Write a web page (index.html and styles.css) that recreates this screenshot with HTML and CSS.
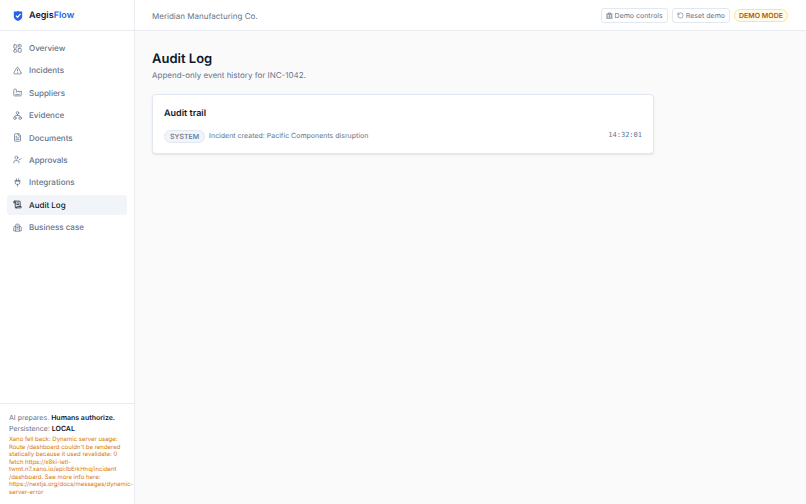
FILE: index.html
```html
<!DOCTYPE html>
<html lang="en">
<head>
<meta charset="utf-8">
<meta name="viewport" content="width=device-width, initial-scale=1">
<title>AegisFlow – Audit Log</title>
<link rel="stylesheet" href="styles.css">
</head>
<body>
<div class="app">
  <aside class="sidebar">
    <a class="brand" href="#">
      <svg class="brand-mark" viewBox="0 0 24 24" aria-hidden="true"><path fill="#2563eb" d="M2 1q5 1 10-1 5 2 10 1v12c0 5-4 9-10 11C6 22 2 18 2 13Z"/><path fill="none" stroke="#fff" stroke-width="3" d="m7 11 4 4 7-8"/></svg>
      <span>Aegis<span class="brand-accent">Flow</span></span>
    </a>
    <nav class="nav" aria-label="Main">
      <a href="#"><svg class="icon" viewBox="0 0 24 24"><rect x="2" y="2" width="8" height="9" rx="2"/><rect x="14" y="2" width="8" height="6" rx="2"/><rect x="14" y="12" width="8" height="10" rx="2"/><rect x="2" y="15" width="8" height="7" rx="2"/></svg>Overview</a>
      <a href="#"><svg class="icon" viewBox="0 0 24 24"><path d="m21.73 18-8-14a2 2 0 0 0-3.48 0l-8 14A2 2 0 0 0 4 21h16a2 2 0 0 0 1.73-3M12 9v4M12 17h.01"/></svg>Incidents</a>
      <a href="#"><svg class="icon" viewBox="0 0 24 24"><path d="M2 19a2 2 0 0 0 2 2h16a2 2 0 0 0 2-2V8l-6 3V8l-7 3V5a2 2 0 0 0-2-2H4a2 2 0 0 0-2 2ZM7 17h10"/></svg>Suppliers</a>
      <a href="#"><svg class="icon" viewBox="0 0 24 24"><circle cx="12" cy="5" r="3.5"/><circle cx="5" cy="19" r="3.5"/><circle cx="19" cy="19" r="3.5"/><path d="M12 9v3M5 15c0-2 1-3 3-3h8c2 0 3 1 3 3"/></svg>Evidence</a>
      <a href="#"><svg class="icon" viewBox="0 0 24 24"><path d="M15 2H6a2 2 0 0 0-2 2v16a2 2 0 0 0 2 2h12a2 2 0 0 0 2-2V7ZM14 2v4a2 2 0 0 0 2 2h4M10 9H8M16 13H8M16 17H8"/></svg>Documents</a>
      <a href="#"><svg class="icon" viewBox="0 0 24 24"><path d="M16 21v-2a4 4 0 0 0-4-4H6a4 4 0 0 0-4 4v2m14-10 2 2 4-4"/><circle cx="9" cy="7" r="4"/></svg>Approvals</a>
      <a href="#"><svg class="icon" viewBox="0 0 24 24"><path d="M12 22v-5M9 8V2M15 8V2M5 8h14M18 8v5a4 4 0 0 1-4 4h-4a4 4 0 0 1-4-4V8Z"/></svg>Integrations</a>
      <a href="#" class="active" aria-current="page"><svg class="icon" viewBox="0 0 24 24"><path d="M15 12h-5M15 8h-5M19 17V5a2 2 0 0 0-2-2H4M8 21h12a2 2 0 0 0 2-2v-1a1 1 0 0 0-1-1H11a1 1 0 0 0-1 1v1a2 2 0 1 1-4 0V5a2 2 0 1 0-4 0v2a1 1 0 0 0 1 1h3"/></svg>Audit Log</a>
      <a href="#"><svg class="icon" viewBox="0 0 24 24"><path d="M7 21V6q0-3 3-3h4q3 0 3 3v15ZM7 9H5q-3 0-3 3v9h5M17 9h2q3 0 3 3v9h-5M10 8h4M10 12h4M10 16h4"/></svg>Business case</a>
    </nav>
    <footer class="status">
      <p>AI prepares. <strong>Humans authorize.</strong></p>
      <p>Persistence: <strong>LOCAL</strong></p>
      <p class="warning">Xano fell back: Dynamic server usage: Route /dashboard couldn't be rendered statically because it used revalidate: 0 fetch https://x8ki-letl-twmt.n7.xano.io/api:lbErkHnq/incident<wbr>/dashboard. See more info here: https://nextjs.org/docs/messages/dynamic-<wbr>server-error</p>
    </footer>
  </aside>
  <div class="content">
    <header class="topbar">
      <span class="company">Meridian Manufacturing Co.</span>
      <div class="actions">
        <button type="button"><svg class="icon" viewBox="0 0 24 24"><path d="M5 7h14v14H5ZM9 7V3h6v4M2 7h20M2 14h3M19 14h3M2 21h20M12 11v6M9 14h6"/></svg>Demo controls</button>
        <button type="button"><svg class="icon" viewBox="0 0 24 24"><path d="M3 12a9 9 0 1 0 9-9 9.75 9.75 0 0 0-6.74 2.74L3 8M3 3v5h5"/></svg>Reset demo</button>
        <span class="mode">DEMO MODE</span>
      </div>
    </header>
    <main class="main">
      <h1>Audit Log</h1>
      <p class="subtitle">Append-only event history for INC-1042.</p>
      <section class="card">
        <h2>Audit trail</h2>
        <div class="event">
          <span class="tag">SYSTEM</span>
          <span class="message">Incident created: Pacific Components disruption</span>
          <time>14:32:01</time>
        </div>
      </section>
    </main>
  </div>
</div>
</body>
</html>
```
FILE: styles.css
```css
* { box-sizing: border-box; }
body { margin: 0; background: #fafafa; color: #64748b; font: 8px/12px Inter, sans-serif; text-rendering: geometricPrecision; }
h1, h2, p { margin: 0; }
a { color: inherit; text-decoration: none; }
.app { display: grid; grid-template-columns: 135px 1fr; min-height: 100vh; }
.icon { width: 9px; height: 9px; flex: none; fill: none; stroke: currentColor; stroke-width: 2; stroke-linecap: round; stroke-linejoin: round; }

.sidebar { display: flex; flex-direction: column; background: #fff; border-right: 1px solid #e8ebf0; }
.brand { display: flex; align-items: center; gap: 6px; height: 31px; padding: 1px 13px 0; border-bottom: 1px solid #e8ebf0; color: #0f172a; font-size: 9px; font-weight: 600; }
.brand-mark { width: 10px; height: 10px; }
.brand-accent { color: #2563eb; }
.nav { display: flex; flex-direction: column; justify-content: space-between; height: 199px; margin-top: 7px; padding: 0 7px; font-weight: 500; }
.nav a { display: flex; align-items: center; gap: 7px; height: 20px; padding: 0 6px; border-radius: 3px; }
.nav .active { background: #f1f5f9; color: #0f172a; }
.status { margin-top: auto; padding: 8px 1px 8px 9px; border-top: 1px solid #e8ebf0; font-size: 7px; line-height: 11px; }
.status strong { color: #0f172a; font-weight: 600; }
.status .warning { margin-top: 2px; color: #d97706; font-size: 6px; line-height: 1.25; }

.topbar { display: flex; align-items: center; justify-content: space-between; height: 31px; padding: 1px 18px 0 17px; background: #fff; border-bottom: 1px solid #e8ebf0; }
.actions { display: flex; align-items: center; gap: 4px; }
.actions button { display: flex; align-items: center; gap: 2px; height: 15px; padding: 0 4px; border: 1px solid #e2e8f0; border-radius: 3px; background: #fff; color: #64748b; font: 7px/9px Inter, sans-serif; text-rendering: inherit; }
.actions .icon { width: 7px; height: 7px; }
.mode { padding: 0 4px; border: 1px solid #fde68a; border-radius: 7px; background: #fffbeb; color: #b45309; font-size: 7px; line-height: 11px; font-weight: 600; }

.main { padding: 19px 17px; }
h1 { color: #0f172a; font-size: 13px; line-height: 18px; font-weight: 600; }
.subtitle { line-height: 14px; }
.card { max-width: 502px; margin-top: 12px; padding: 11px 11px 10px; border: 1px solid #e2e8f0; border-radius: 4px; background: #fff; box-shadow: 0 1px 2px #0f172a18; }
h2 { color: #0f172a; font-size: 9px; line-height: 16px; font-weight: 600; }
.event { display: flex; align-items: flex-start; gap: 4px; margin-top: 8px; font-size: 7px; line-height: 11px; }
.tag { padding: 0 5px; border: 1px solid #e2e8f0; border-radius: 7px; background: #f1f5f9; font-weight: 500; }
.message { flex: 1; }
time { font-family: "DejaVu Sans Mono", monospace; }
```
